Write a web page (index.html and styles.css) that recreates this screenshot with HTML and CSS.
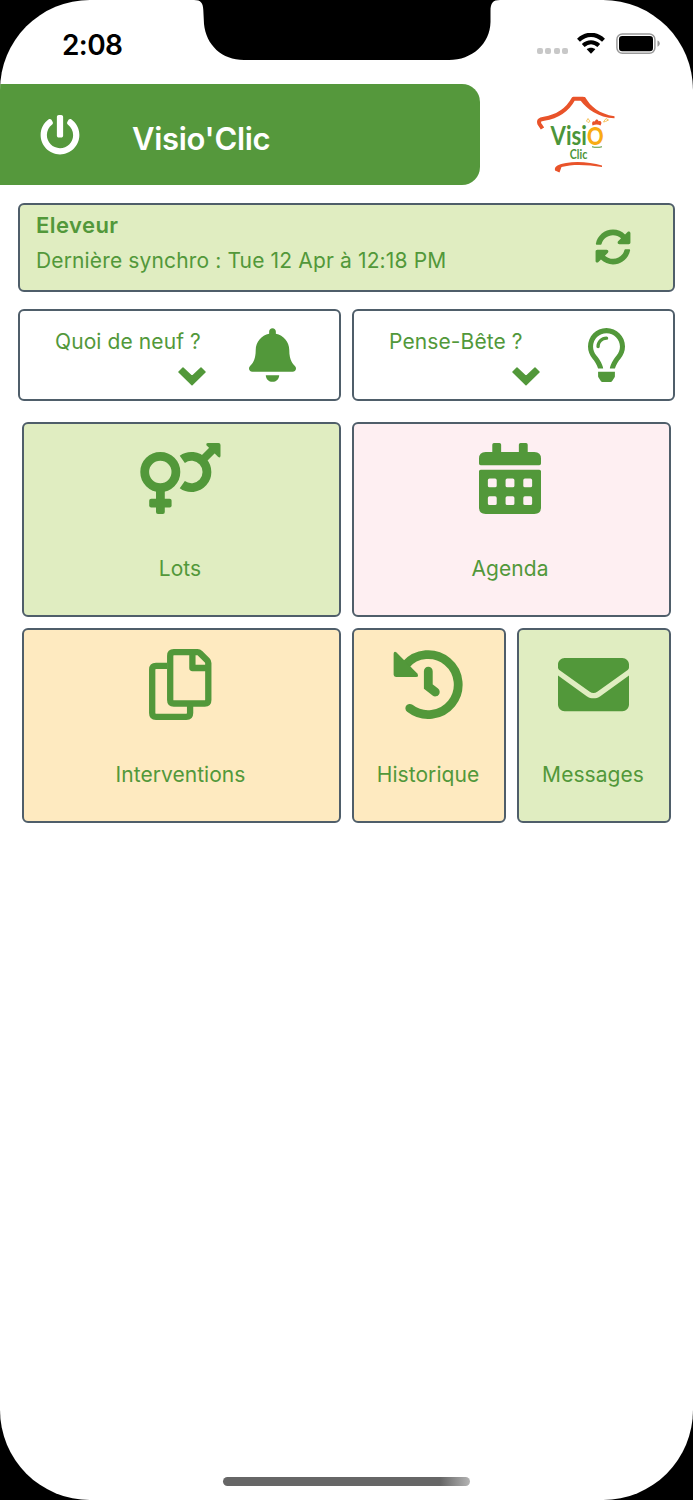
FILE: index.html
```
<!DOCTYPE html>
<html lang="fr">
<head>
    <meta charset="UTF-8">
    <meta name="viewport" content="width=device-width, initial-scale=1.0">
    <title>Visio'Clic</title>
    <link rel="stylesheet" href="styles.css">
</head>
<body>
    <div class="screen">
        <svg class="notch" viewBox="0 0 306 61"><path d="M0 0C7 0 9 3 9.300 10L10 24C12 45 28 60 50 60H255C278 60 296 44 296.500 22V11C296.500 3 299 0 306 0z"/></svg>
        <div class="status-bar">
            <span class="time">2:08</span>
            <div class="status-icons">
                <div class="dots"><i></i><i></i><i></i><i></i></div>
                <svg class="wifi" viewBox="0 0 28 21">
                    <path d="M1.500 7.200C9 0 19 0 26.500 7.200M6.200 12.500C11 8.300 17 8.300 21.800 12.500" fill="none" stroke="#000" stroke-width="4.200"/>
                    <path d="M9.700 16.300C12.300 14.300 15.700 14.300 18.300 16.300L14 20.700z"/>
                </svg>
                <svg class="battery" viewBox="0 0 44 22">
                    <rect x=".9" y=".9" width="38" height="19.400" rx="5.500" fill="none" stroke="#999" stroke-width="1.500"/>
                    <rect x="3" y="3" width="34" height="15.200" rx="3.200"/>
                    <path d="M41.500 7.500C44.500 8.500 44.500 12.700 41.500 13.700z" fill="#999"/>
                </svg>
            </div>
        </div>

        <div class="header">
            <div class="title-bar">
                <svg class="power" viewBox="0 0 512 512"><path d="M400 54.100c63 45 104 118.600 104 201.900 0 136.800-110.800 247.700-247.500 248C120 504.300 8.200 393 8 256.400 7.900 173.100 48.900 99.300 111.800 54.200c11.700-8.300 28-4.800 35 7.700L162.600 90c5.900 10.500 3.100 23.800-6.600 31-41.500 30.800-68 79.600-68 134.900-.1 92.300 74.500 168.100 168 168.100 91.600 0 168.600-74.200 168-169.100-.3-51.800-24.700-101.800-68.100-134-9.700-7.200-12.400-20.500-6.500-30.900l15.800-28.100c7-12.400 23.200-16.100 34.800-7.800zM296 264V24c0-13.300-10.700-24-24-24h-32c-13.300 0-24 10.700-24 24v240c0 13.300 10.700 24 24 24h32c13.300 0 24-10.700 24-24z"/></svg>
                <h1>Visio'Clic</h1>
            </div>
            <svg class="logo" viewBox="0 0 82 82">
                <path d="M7.500 34.500L4.500 30C3 26 5 25.500 9 24.800C23 22.500 33 15 38.500 4.800H48.500" fill="none" stroke="#e9532a" stroke-width="4" stroke-linejoin="round"/>
                <path d="M45.500 2.900H50C56 13 64 19.500 79.500 22.300V24.300C63 23.500 52 15 45.500 6.500z" fill="#e9532a"/>
                <text class="logo-visi" x="15.500" y="50.500" textLength="53" lengthAdjust="spacingAndGlyphs">Visi<tspan class="logo-o">O</tspan></text>
                <path d="M57.500 31.500C56.500 28.500 57.500 26.500 60 27.500C60.500 24.800 63 25 63.500 27.200C66 26.500 67.500 28.500 65.500 31.500C63 30 60.500 30 57.500 31.500z" fill="#e9532a"/>
                <path d="M51.500 27L53 24.500L55 27.500L53 28.500zM68.500 28L71 24.500L73.500 26L70.500 27.500z" fill="none" stroke="#f6c25e" stroke-width="1"/>
                <path d="M57 52.700Q62 53.800 67 52.700" fill="none" stroke="#55983b" stroke-width="1.100"/>
                <text class="logo-clic" x="34.800" y="64.500" textLength="17.500" lengthAdjust="spacingAndGlyphs">Clic</text>
                <path d="M20 76.500C19 72 24 70 31 69C43 67 56 68.500 67 71.500V73C52 70.500 37 70 26.500 73L24.500 78.500z" fill="#e9532a"/>
            </svg>
        </div>

        <div class="sync-card">
            <div>
                <div class="user">Eleveur</div>
                <div class="last-sync">Dernière synchro : Tue 12 Apr à 12:18 PM</div>
            </div>
            <svg class="sync" viewBox="0 0 512 512"><path d="M370.720 133.280C339.458 104.008 298.888 87.962 255.848 88c-77.458.068-144.328 53.178-162.791 126.850-1.344 5.363-6.122 9.150-11.651 9.150H24.103c-7.498 0-13.194-6.807-11.807-14.176C33.933 94.924 134.813 8 256 8c66.448 0 126.791 26.136 171.315 68.685L463.030 40.970C478.149 25.851 504 36.559 504 57.941V192c0 13.255-10.745 24-24 24H345.941c-21.382 0-32.090-25.851-16.971-40.971l41.750-41.749zM32 296h134.059c21.382 0 32.090 25.851 16.971 40.971l-41.750 41.750c31.262 29.273 71.835 45.319 114.876 45.280 77.418-.07 144.315-53.144 162.787-126.849 1.344-5.363 6.122-9.150 11.651-9.150h57.304c7.498 0 13.194 6.807 11.807 14.176C478.067 417.076 377.187 504 256 504c-66.448 0-126.791-26.136-171.315-68.685L48.970 471.030C33.851 486.149 8 475.441 8 454.059V320c0-13.255 10.745-24 24-24z"/></svg>
        </div>

        <div class="panels">
            <div class="panel">
                <div class="panel-text">
                    <span>Quoi de neuf ?</span>
                    <svg class="chevron" viewBox="0 0 28 19"><path d="M1 5L5 1L14 9.500L23 1L27 5L14 17.700z"/></svg>
                </div>
                <svg class="bell" viewBox="0 0 448 512"><path d="M224 512c35.320 0 63.970-28.650 63.970-64H160.030c0 35.350 28.650 64 63.970 64zm215.390-149.710c-19.320-20.760-55.470-51.990-55.470-154.290 0-77.700-54.480-139.900-127.940-155.160V32c0-17.670-14.320-32-31.980-32s-31.980 14.330-31.980 32v20.840C118.560 68.100 64.080 130.300 64.080 208c0 102.300-36.150 133.530-55.470 154.290-6 6.450-8.660 14.160-8.610 21.710.11 16.400 12.980 32 32.100 32h383.800c19.120 0 32-15.600 32.100-32 .05-7.550-2.610-15.270-8.610-21.710z"/></svg>
            </div>
            <div class="panel">
                <div class="panel-text">
                    <span>Pense-Bête ?</span>
                    <svg class="chevron" viewBox="0 0 28 19"><path d="M1 5L5 1L14 9.500L23 1L27 5L14 17.700z"/></svg>
                </div>
                <svg class="bulb" viewBox="0 0 352 512"><path d="M176 80c-52.940 0-96 43.060-96 96 0 8.840 7.160 16 16 16s16-7.160 16-16c0-35.300 28.720-64 64-64 8.840 0 16-7.160 16-16s-7.160-16-16-16zM96.060 459.170c0 3.150.93 6.220 2.680 8.840l24.510 36.840c2.970 4.460 7.970 7.140 13.320 7.140h78.850c5.360 0 10.360-2.680 13.320-7.140l24.510-36.840c1.740-2.620 2.670-5.700 2.680-8.840l.05-43.180H96.020l.04 43.180zM176 0C73.720 0 0 82.970 0 176c0 44.370 16.450 84.850 43.560 115.780 16.640 18.990 42.740 58.800 52.420 92.160v.06h48v-.12c-.01-4.770-.72-9.510-2.150-14.070-5.590-17.810-22.820-64.710-62.170-109.670-20.540-23.430-31.520-53.150-31.610-84.140-.2-73.640 59.670-128 127.950-128 70.580 0 128 57.420 128 128 0 30.970-11.240 60.850-31.650 84.140-39.110 44.610-56.420 91.470-62.100 109.460a47.507 47.507 0 0 0-2.220 14.300v.1h48v-.05c9.680-33.370 35.780-73.180 52.420-92.160C335.550 260.850 352 220.370 352 176 352 78.800 273.200 0 176 0z"/></svg>
            </div>
        </div>

        <div class="menu">
            <div class="tile green wide">
                <svg width="81" height="71" viewBox="0 0 81 71">
                    <g fill="none" stroke="currentColor">
                        <circle cx="20.300" cy="29" r="15.600" stroke-width="8.800"/>
                        <path d="M42.300 16.300A15.600 15.600 0 1 1 42.300 41.700" stroke-width="8.800"/>
                        <path d="M61 18.500L74 5.500" stroke-width="8"/>
                    </g>
                    <rect x="16" y="46" width="8.800" height="25" rx="2"/>
                    <rect x="9.200" y="55.800" width="22.400" height="8.800" rx="2"/>
                    <path d="M68 0H78.500Q80.500 0 80.500 2V12.500Q80.500 15.500 78 13.800L66.700 2.600Q65.500 0 68 0z"/>
                </svg>
                <span>Lots</span>
            </div>
            <div class="tile pink wide">
                <svg width="62" height="71" viewBox="0 0 448 512"><path fill-rule="evenodd" d="M48 64H96V12Q96 0 108 0H148Q160 0 160 12V64H288V12Q288 0 300 0H340Q352 0 352 12V64H400Q448 64 448 112V148Q448 160 436 160H12Q0 160 0 148V112Q0 64 48 64zM12 192H436Q448 192 448 204V464Q448 512 400 512H48Q0 512 0 464V204Q0 192 12 192zM76 256Q64 256 64 268V308Q64 320 76 320H116Q128 320 128 308V268Q128 256 116 256zM204 256Q192 256 192 268V308Q192 320 204 320H244Q256 320 256 308V268Q256 256 244 256zM332 256Q320 256 320 268V308Q320 320 332 320H372Q384 320 384 308V268Q384 256 372 256zM76 384Q64 384 64 396V436Q64 448 76 448H116Q128 448 128 436V396Q128 384 116 384zM204 384Q192 384 192 396V436Q192 448 204 448H244Q256 448 256 436V396Q256 384 244 384zM332 384Q320 384 320 396V436Q320 448 332 448H372Q384 448 384 436V396Q384 384 372 384z"/></svg>
                <span>Agenda</span>
            </div>
            <div class="tile orange">
                <svg width="63" height="71" viewBox="0 0 63 71">
                    <g fill="none" stroke="currentColor" stroke-width="6.300" stroke-linejoin="round">
                        <path d="M18 16.800H7Q3.200 16.800 3.200 20.600V64Q3.200 67.800 7 67.800H37.300Q41.100 67.800 41.100 64V57"/>
                        <path d="M24.800 3.200H48.500Q50 3.200 51 4.200L58.300 11.500Q59.300 12.500 59.300 14V51Q59.300 54.500 55.800 54.500H24.800Q21.200 54.500 21.200 51V6.800Q21.200 3.200 24.800 3.200z"/>
                        <path d="M43.400 3.500V19H59"/>
                    </g>
                </svg>
                <span>Interventions</span>
            </div>
            <div class="tile orange">
                <svg width="70" height="71" viewBox="0 0 70 71">
                    <g fill="none" stroke="currentColor" stroke-width="8.800" stroke-linecap="round">
                        <path d="M16.800 59.300A30 30 0 1 0 12.500 16"/>
                        <path d="M35.300 22.200V37.500L42.300 43"/>
                    </g>
                    <path d="M.6 5Q.8 1.800 3.500 3.400L24.300 24.500Q26.300 28 23 28H3Q.6 28 .6 25.600z"/>
                </svg>
                <span>Historique</span>
            </div>
            <div class="tile green">
                <svg width="71" height="71" viewBox="0 0 512 512"><path d="M464 64H48C21.500 64 0 85.500 0 112v19c0 10 5 18 12 23L229 309c17 12 37 12 54 0L500 154c7-5 12-13 12-23v-19c0-26.500-21.500-48-48-48zM0 191L207 340c31 21 67 21 98 0L512 191V400c0 26.500-21.500 48-48 48H48c-26.500 0-48-21.500-48-48z"/></svg>
                <span>Messages</span>
            </div>
        </div>

        <div class="home-indicator"></div>
    </div>
</body>
</html>
```
FILE: styles.css
```
* {
    box-sizing: border-box;
}
body {
    margin: 0;
    background-color: #000000;
    color: #52983a;
    font-family: Inter, "Liberation Sans", sans-serif;
    font-size: 21px;
}
svg {
    display: block;
    flex-shrink: 0;
    fill: currentColor;
}
.screen {
    position: relative;
    display: flex;
    flex-direction: column;
    width: 693px;
    height: 1500px;
    background-color: #ffffff;
    border-radius: 90px;
    overflow: hidden;
}
/* notch lies over the status bar */
.notch {
    position: absolute;
    top: 0;
    left: 193.500px;
    width: 306px;
    height: 61px;
    color: #000000;
}
.status-bar {
    display: flex;
    justify-content: space-between;
    height: 84px;
    padding: 28px 33px 0 62px;
    color: #000000;
}
.time {
    font-size: 28px;
    line-height: 34px;
    font-weight: 600;
    letter-spacing: -0.600px;
}
.status-icons {
    display: flex;
    padding-top: 5px;
}
.dots {
    display: flex;
    gap: 2.500px;
    padding-top: 15px;
}
.dots i {
    width: 6px;
    height: 6px;
    border-radius: 2px;
    background-color: #c8c8c8;
}
.wifi {
    width: 28px;
    height: 21px;
    margin: 0 11px 0 9px;
}
.battery {
    width: 44px;
    height: 22px;
}
.header {
    display: flex;
    height: 101px;
}
.title-bar {
    display: flex;
    width: 480px;
    padding-left: 40px;
    background-color: #55983c;
    border-radius: 0 18px 18px 0;
    color: #ffffff;
}
.power {
    width: 40px;
    height: 40px;
    margin: 31px 52px 0 0;
}
h1 {
    margin: 35px 0 0;
    font-size: 31px;
    line-height: 40px;
    font-weight: 600;
    letter-spacing: -0.300px;
}
.logo {
    width: 82px;
    height: 82px;
    margin: 10px 0 0 55px;
}
.logo-visi, .logo-clic {
    font-family: Lato, sans-serif;
    font-weight: 700;
    fill: #4c9539;
}
.logo-visi {
    font-size: 26px;
}
.logo-o {
    font-size: 24px;
    font-weight: 900;
    fill: #f9ab13;
}
.logo-clic {
    font-size: 12.500px;
}
.sync-card, .panel, .tile {
    border: 2px solid #4f5e6a;
    border-radius: 6px;
}
.sync-card {
    display: flex;
    justify-content: space-between;
    height: 89px;
    margin: 18px 18px 0;
    padding: 3px 42px 0 16px;
    background-color: #e0edc1;
}
.user {
    font-size: 22px;
    line-height: 35px;
    font-weight: 600;
    letter-spacing: 0.450px;
}
.last-sync {
    line-height: 35px;
    letter-spacing: 0.140px;
    white-space: nowrap;
}
.sync {
    width: 36px;
    height: 36px;
    margin-top: 21px;
}
.panels {
    display: grid;
    grid-template-columns: 1fr 1fr;
    gap: 11px;
    padding: 17px 18px 0;
}
.panel {
    display: flex;
    justify-content: space-between;
    height: 92px;
    padding: 17px 43px 0 35px;
}
.panel:last-child {
    padding-right: 48px;
}
.panel-text {
    width: 151px;
    line-height: 28px;
    letter-spacing: 0.100px;
    white-space: nowrap;
}
.chevron {
    width: 28px;
    height: 19px;
    margin: 11px 0 0 auto;
    stroke: currentColor;
    stroke-width: 1.500;
    stroke-linejoin: round;
}
.bell {
    width: 47px;
    height: 54px;
}
.bulb {
    width: 37px;
    height: 54px;
}
.menu {
    display: grid;
    grid-template-columns: 319px 154px 154px;
    gap: 11px;
    padding: 21px 22px 0;
}
.tile {
    display: flex;
    flex-direction: column;
    align-items: center;
    height: 195px;
    padding: 19px 2px 0 0;
    letter-spacing: 0.050px;
}
.tile span {
    margin-top: 40px;
    line-height: 30px;
}
.wide {
    padding-right: 3px;
}
.pink {
    grid-column: span 2;
    background-color: #feeff2;
}
.green {
    background-color: #e0edc1;
}
.orange {
    background-color: #feeac0;
}
.home-indicator {
    width: 247px;
    height: 9px;
    margin: auto auto 14px 223px;
    border-radius: 5px;
    background: linear-gradient(90deg, #666666 88%, #b4b4b4);
}
```
